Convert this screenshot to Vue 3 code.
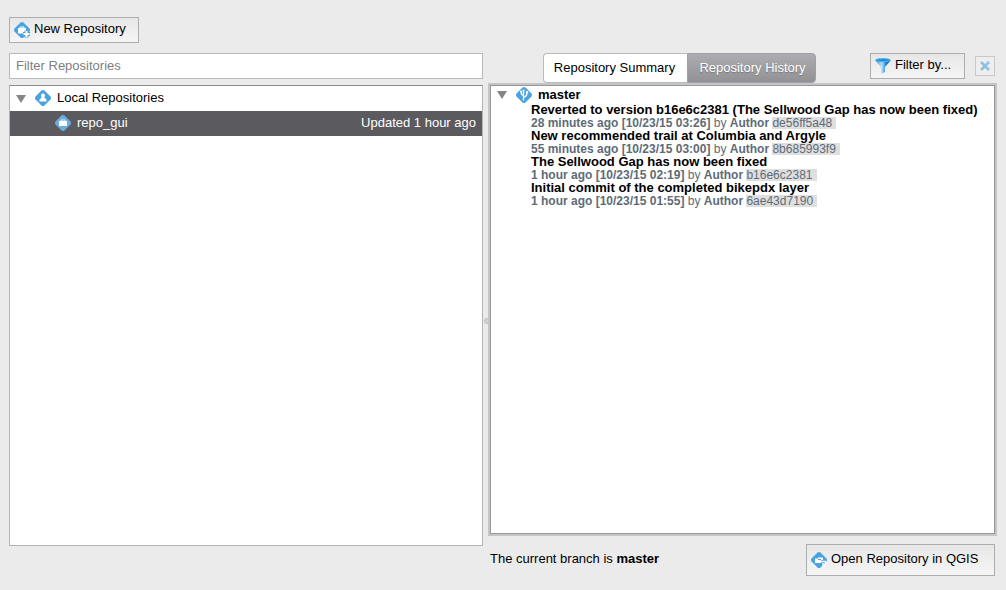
<script setup>
import { ref } from 'vue'

const filter = ref('')
const activeTab = ref('history')
const commits = [
  { title: 'Reverted to version b16e6c2381 (The Sellwood Gap has now been fixed)', when: '28 minutes ago [10/23/15 03:26]', id: 'de56ff5a48' },
  { title: 'New recommended trail at Columbia and Argyle', when: '55 minutes ago [10/23/15 03:00]', id: '8b685993f9' },
  { title: 'The Sellwood Gap has now been fixed', when: '1 hour ago [10/23/15 02:19]', id: 'b16e6c2381' },
  { title: 'Initial commit of the completed bikepdx layer', when: '1 hour ago [10/23/15 01:55]', id: '6ae43d7190' }
]
</script>

<template>
  <main class="window">
    <section class="left">
      <button type="button" class="btn new-btn">
        <svg class="icon" viewBox="0 0 16 16" aria-hidden="true">
          <path d="M6.500.5Q8-.5 9.500.5L15.500 6.500Q16.500 8 15.500 9.500L9.500 15.500Q8 16.500 6.500 15.500L.5 9.500Q-.5 8 .5 6.500Z" fill="#4aa3df" />
          <rect x="4" y="6" width="8" height="5.500" rx=".8" fill="#fff" />
          <path d="M6 6.500V5h4v1.500" fill="none" stroke="#fff" />
          <path d="M12.500 8.500v7M9 12h7" stroke="#4aa3df" stroke-width="4" />
          <path d="M12.500 9v6M9.500 12h6" stroke="#fff" stroke-width="2" />
        </svg>
        <span>New Repository</span>
      </button>
      <input v-model="filter" class="filter" type="text" placeholder="Filter Repositories" aria-label="Filter Repositories">
      <ul class="tree">
        <li>
          <div class="row root">
            <svg class="arrow" viewBox="0 0 10 8" aria-hidden="true"><path d="M0 0h10L5 8Z" /></svg>
            <svg class="icon" viewBox="0 0 16 16" aria-hidden="true">
              <path d="M6.500.5Q8-.5 9.500.5L15.500 6.500Q16.500 8 15.500 9.500L9.500 15.500Q8 16.500 6.500 15.500L.5 9.500Q-.5 8 .5 6.500Z" fill="#4aa3df" />
              <ellipse cx="8" cy="5.800" rx="2" ry="2.500" fill="#fff" />
              <path d="M4.500 11.500q-.5-3 2-3.500h3q2.500.5 2 3.500Z" fill="#fff" />
            </svg>
            <span>Local Repositories</span>
          </div>
          <ul>
            <li class="row selected">
              <svg class="icon" viewBox="0 0 16 16" aria-hidden="true">
                <path d="M6.500.5Q8-.5 9.500.5L15.500 6.500Q16.500 8 15.500 9.500L9.500 15.500Q8 16.500 6.500 15.500L.5 9.500Q-.5 8 .5 6.500Z" fill="#6aaede" />
                <rect x="4" y="6" width="8" height="5" fill="#fff" />
                <path d="M6 6V5h4v1" fill="none" stroke="#fff" stroke-width=".8" />
              </svg>
              <span>repo_gui</span>
              <span class="updated">Updated 1 hour ago</span>
            </li>
          </ul>
        </li>
      </ul>
    </section>

    <div class="splitter"><i></i></div>

    <section class="right">
      <header class="toolbar">
        <div class="tabs" role="tablist">
          <button type="button" role="tab" :class="{ active: activeTab === 'summary' }" @click="activeTab = 'summary'">Repository Summary</button>
          <button type="button" role="tab" :class="{ active: activeTab === 'history' }" @click="activeTab = 'history'">Repository History</button>
        </div>
        <button type="button" class="btn filter-btn">
          <svg class="icon" viewBox="0 0 16 16" aria-hidden="true">
            <defs>
              <linearGradient id="funnel" x1="0" x2="1" y1="0" y2="0">
                <stop offset="0" stop-color="#2d95df" /><stop offset=".42" stop-color="#b5e5fb" /><stop offset=".7" stop-color="#1c7fd0" /><stop offset="1" stop-color="#0c68b8" />
              </linearGradient>
            </defs>
            <path d="M.3 2.500 6 9v7l4-2V9l5.700-6.500Z" fill="url(#funnel)" />
            <ellipse cx="8" cy="2.200" rx="7.500" ry="1.600" fill="#2b8bd0" stroke="#48b5ef" />
          </svg>
          <span>Filter by...</span>
        </button>
        <button type="button" class="clear" aria-label="Clear filter">
          <svg viewBox="0 0 10 10" aria-hidden="true"><path d="M1 1 9 9M9 1 1 9" stroke="#8fc0df" stroke-width="2.600" /></svg>
        </button>
      </header>
      <div class="history">
        <div class="branch">
          <svg class="arrow" viewBox="0 0 10 8" aria-hidden="true"><path d="M0 0h10L5 8Z" /></svg>
          <svg class="icon" viewBox="0 0 16 16" aria-hidden="true">
            <path d="M6.500.5Q8-.5 9.500.5L15.500 6.500Q16.500 8 15.500 9.500L9.500 15.500Q8 16.500 6.500 15.500L.5 9.500Q-.5 8 .5 6.500Z" fill="#4aa3df" />
            <path d="M7.500 13.500V4M7.500 10.500Q11 9.500 11 5.500M7.500 8.500Q5 7.500 5 5" fill="none" stroke="#fff" stroke-width="1.300" />
            <circle cx="7.500" cy="3.500" r="1.100" fill="#fff" /><circle cx="11" cy="5.200" r="1.200" fill="#fff" /><circle cx="5" cy="4.600" r="1" fill="#fff" />
          </svg>
          <strong>master</strong>
        </div>
        <ul class="commits">
          <li v-for="c in commits" :key="c.id">
            <strong class="title">{{ c.title }}</strong>
            <span class="meta"><b>{{ c.when }}</b> by <b>Author</b> <span class="hash">{{ c.id }}</span></span>
          </li>
        </ul>
      </div>
      <footer class="footer">
        <p>The current branch is <strong>master</strong></p>
        <button type="button" class="btn open-btn">
          <svg class="icon" viewBox="0 0 16 16" aria-hidden="true">
            <path d="M6.500.5Q8-.5 9.500.5L15.500 6.500Q16.500 8 15.500 9.500L9.500 15.500Q8 16.500 6.500 15.500L.5 9.500Q-.5 8 .5 6.500Z" fill="#4aa3df" />
            <path d="M4 6.500h3V5.500h5V8h-2v3H4Z" fill="#fff" />
            <path d="M7 7.500h3" stroke="#4aa3df" />
            <path d="M10 9.500h4.500v3q0 2.500-3 2.500M12 11v2.500" fill="none" stroke="#fff" stroke-width="1.400" />
          </svg>
          <span>Open Repository in QGIS</span>
        </button>
      </footer>
    </section>
  </main>
</template>

<style>
body { background: #ebebeb; }
</style>

<style scoped>
* { box-sizing: border-box; }
.window {
  min-height: 100vh;
  padding: 17px 11px 14px 9px;
  display: grid;
  grid-template-columns: minmax(0, 474fr) 7px minmax(0, 505fr);
  font: 13px/16px "Liberation Sans", Arial, Helvetica, sans-serif;
  color: #000;
}
ul { list-style: none; margin: 0; padding: 0; }
button { font: inherit; color: inherit; margin: 0; }
.icon { width: 16px; height: 16px; flex: none; display: block; }
.arrow { width: 10px; height: 8px; flex: none; fill: #858585; }
.btn {
  display: flex;
  align-items: center;
  gap: 4px;
  border: 1px solid #adadad;
  border-radius: 0;
  background: linear-gradient(#e7e7e7, #f5f5f5);
  padding: 0 4px;
  height: 26px;
  white-space: nowrap;
}
.btn span { padding-bottom: 2px; }
.left { display: flex; flex-direction: column; padding-bottom: 30px; }
.new-btn { width: 130px; }
.filter {
  width: 100%;
  height: 26px;
  margin: 10px 0 6px;
  border: 1px solid #b9b9b9;
  border-radius: 0;
  padding: 0 6px 2px;
  background: #fff;
  font: inherit;
  outline: none;
}
.filter::placeholder { color: #808080; opacity: 1; }
.tree { flex: 1; background: #fff; border: 1px solid #b4b4b4; border-top-color: #8c8c8c; }
.row { display: flex; align-items: center; height: 25px; gap: 6px; }
.row span { padding-bottom: 2px; }
.root { padding-left: 6px; }
.root .icon { margin-left: 3px; }
.selected { background: #5b5a5f; color: #fff; padding: 0 6px 0 45px; }
.row .icon { margin-bottom: 1px; }
.updated { margin-left: auto; }
.splitter { display: flex; align-items: center; justify-content: center; padding-top: 48px; }
.splitter i { width: 6px; height: 6px; border-radius: 50%; background: #d2d2d2; border: 1px solid #bcbcbc; }
.right { display: flex; flex-direction: column; padding-top: 36px; }
.toolbar { display: flex; align-items: flex-start; height: 30px; margin-bottom: 2px; }
.tabs { display: flex; margin: 0 auto 0 53px; height: 30px; }
.tabs button {
  border: 1px solid #bbb;
  border-right: 0;
  border-radius: 4px 0 0 4px;
  background: #fff;
  width: 144px;
  padding: 0 2px 0 0;
  white-space: nowrap;
}
.tabs button + button { border-radius: 0 4px 4px 0; width: 129px; padding: 0 0 0 2px; border: 1px solid #a09fa3; }
.tabs .active { background: linear-gradient(#adacb1, #929196); color: #fff; text-shadow: 0 1px 1px #77777b; }
.filter-btn { width: 95px; }
.clear {
  width: 20px;
  height: 20px;
  margin: 3px 0 0 10px;
  padding: 0;
  border: 1px solid #c9c9c9;
  background: #eee;
  display: flex;
  align-items: center;
  justify-content: center;
}
.clear svg { width: 10px; height: 10px; flex: none; }
.history { flex: 1; background: #fff; border: 1px solid #989898; box-shadow: 0 0 0 2px #c5c5c7; }
.branch { display: flex; align-items: center; height: 18px; padding-left: 6px; gap: 6px; }
.branch .icon { margin-left: 3px; }
.commits { padding-left: 40px; }
.title { display: block; line-height: 12px; white-space: nowrap; }
.meta { display: block; font-size: 12px; line-height: 14px; color: #5d6b78; white-space: nowrap; }
.hash { display: inline-block; line-height: 12px; background: #dfdfdf; padding-right: 4px; }
.footer { display: flex; justify-content: space-between; align-items: flex-start; margin-top: 10px; }
.footer p { margin: 7px 0 0; }
.open-btn { height: 32px; width: 189px; }
</style>
